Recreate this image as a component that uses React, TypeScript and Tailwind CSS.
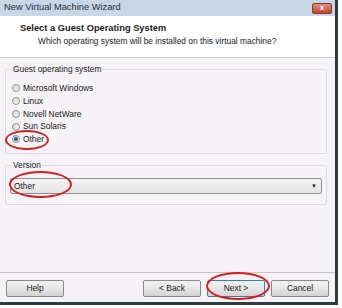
import React from 'react';

const radios = ['Microsoft Windows', 'Linux', 'Novell NetWare', 'Sun Solaris', 'Other'];

function Radio({ label, checked }: { label: string; checked?: boolean }) {
  return (
    <div className="flex items-center h-[12.75px] gap-[3px]">
      <span className="w-[8px] h-[8px] rounded-full border border-[#8e8f8f] bg-gradient-to-br from-[#d8d8d8] to-[#f8f8f8] flex items-center justify-center">
        {checked && <span className="w-[4px] h-[4px] rounded-full bg-[#1d5a9e]" />}
      </span>
      <span>{label}</span>
    </div>
  );
}

function Button({ label, primary }: { label: string; primary?: boolean }) {
  return (
    <div
      className={`w-[58px] h-[17px] rounded-[2px] border flex items-center justify-center bg-gradient-to-b from-[#f2f2f2] via-[#e6e6e6] to-[#d2d2d2] ${
        primary ? 'border-[#3c7fb1]' : 'border-[#8a8a8a]'
      }`}
    >
      {label}
    </div>
  );
}

export default function App() {
  return (
    <div className="w-[342px] h-[308px] bg-white relative text-[8.4px] text-[#1a1a1a] font-['Liberation_Sans',Arial,sans-serif]">
      <div className="w-[338px] h-[305px] flex flex-col border-r-[3px] border-b-[3px] border-r-[#2c3a44] border-b-[#2c3a44]">
        {/* title bar */}
        <div className="h-[16px] bg-[#c8d7e8] flex items-center justify-between pl-[4px] pr-[3px]">
          <span className="text-[9.3px] text-[#1e2a36]">New Virtual Machine Wizard</span>
          <div className="w-[20px] h-[11px] rounded-[2px] bg-gradient-to-b from-[#e0907e] to-[#c2402a] border border-[#8a3a2c] flex items-center justify-center text-white text-[8px] font-bold leading-none">
            x
          </div>
        </div>
        {/* header */}
        <div className="h-[42px] bg-white pl-[20px] pt-[6px] border-b border-[#c8c8c8]">
          <div className="font-bold text-[9.3px] leading-[12px]">Select a Guest Operating System</div>
          <div className="pl-[18px] leading-[14px]">Which operating system will be installed on this virtual machine?</div>
        </div>
        {/* body */}
        <div className="flex-1 bg-[#f5f3f6] flex flex-col">
          <div className="px-[5px] pr-[8px] pt-[6px]">
            <fieldset className="border border-[#dcdadd] rounded-[2px] px-[6px] pb-[6px] h-[90px]">
              <legend className="px-[1px] leading-[10px]">Guest operating system</legend>
              <div className="pt-[8px]">
                {radios.map((r) => (
                  <Radio key={r} label={r} checked={r === 'Other'} />
                ))}
              </div>
            </fieldset>
            <fieldset className="mt-[6px] border border-[#dcdadd] rounded-[2px] px-[4px] h-[45px]">
              <legend className="ml-[2px] px-[1px] leading-[10px]">Version</legend>
              <div className="mt-[8px] h-[16px] border border-[#8f8f8f] rounded-[2px] bg-gradient-to-b from-[#f6f6f6] to-[#e2e2e2] flex items-center justify-between pl-[3px] pr-[4px]">
                <span>Other</span>
                <span className="text-[6px] leading-none">▼</span>
              </div>
            </fieldset>
          </div>
          <div className="flex-1" />
          <div className="border-t border-[#c8c6c9] h-[30px] flex items-start pt-[7px] px-[6px]">
            <Button label="Help" />
            <div className="flex-1" />
            <div className="flex gap-[6px]">
              <Button label="< Back" />
              <Button label="Next >" primary />
              <Button label="Cancel" />
            </div>
          </div>
        </div>
      </div>
      {/* red annotation ellipses */}
      <div className="absolute left-[5px] top-[130px] w-[44px] h-[20px] rounded-[50%] border-[2px] border-[#d42020]" />
      <div className="absolute left-[9px] top-[171px] w-[63px] h-[27px] rounded-[50%] border-[2px] border-[#d42020]" />
      <div className="absolute left-[206px] top-[272px] w-[64px] h-[28px] rounded-[50%] border-[2px] border-[#d42020]" />
    </div>
  );
}
